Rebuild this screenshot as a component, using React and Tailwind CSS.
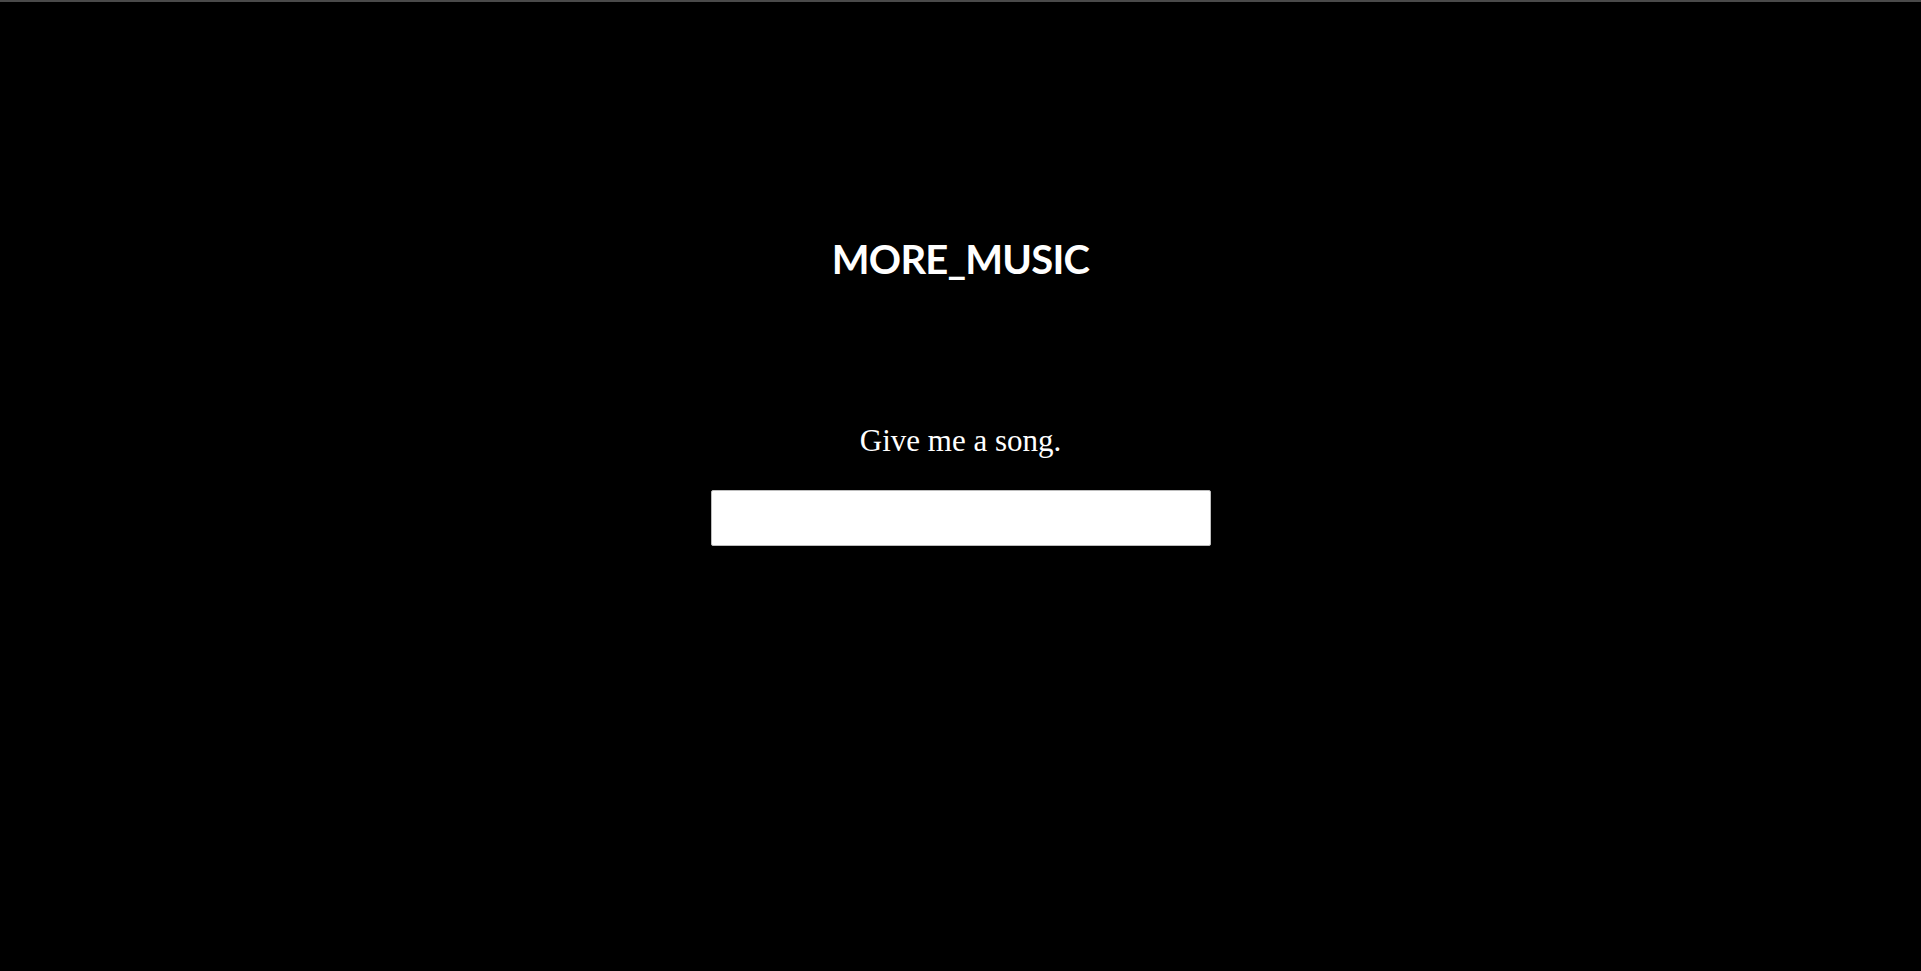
export default function App() {
  return (
    <div className="min-h-screen w-full bg-black border-t-2 border-[#4a4a4a] flex flex-col items-center">
      <h1
        className="mt-[230px] text-[40px] leading-[54px] font-bold text-white tracking-[-0.8px]"
        style={{ fontFamily: 'Lato, "Noto Sans", sans-serif' }}
      >
        MORE_MUSIC
      </h1>
      <p
        className="mt-[136px] text-[31px] leading-[38px] text-white"
        style={{ fontFamily: '"Liberation Serif", serif' }}
      >
        Give me a song.
      </p>
      <input
        type="text"
        className="mt-[30px] w-[500px] h-[56px] bg-white border border-[#bdbdbd] rounded-[2px] px-3 text-lg outline-none"
      />
    </div>
  );
}
